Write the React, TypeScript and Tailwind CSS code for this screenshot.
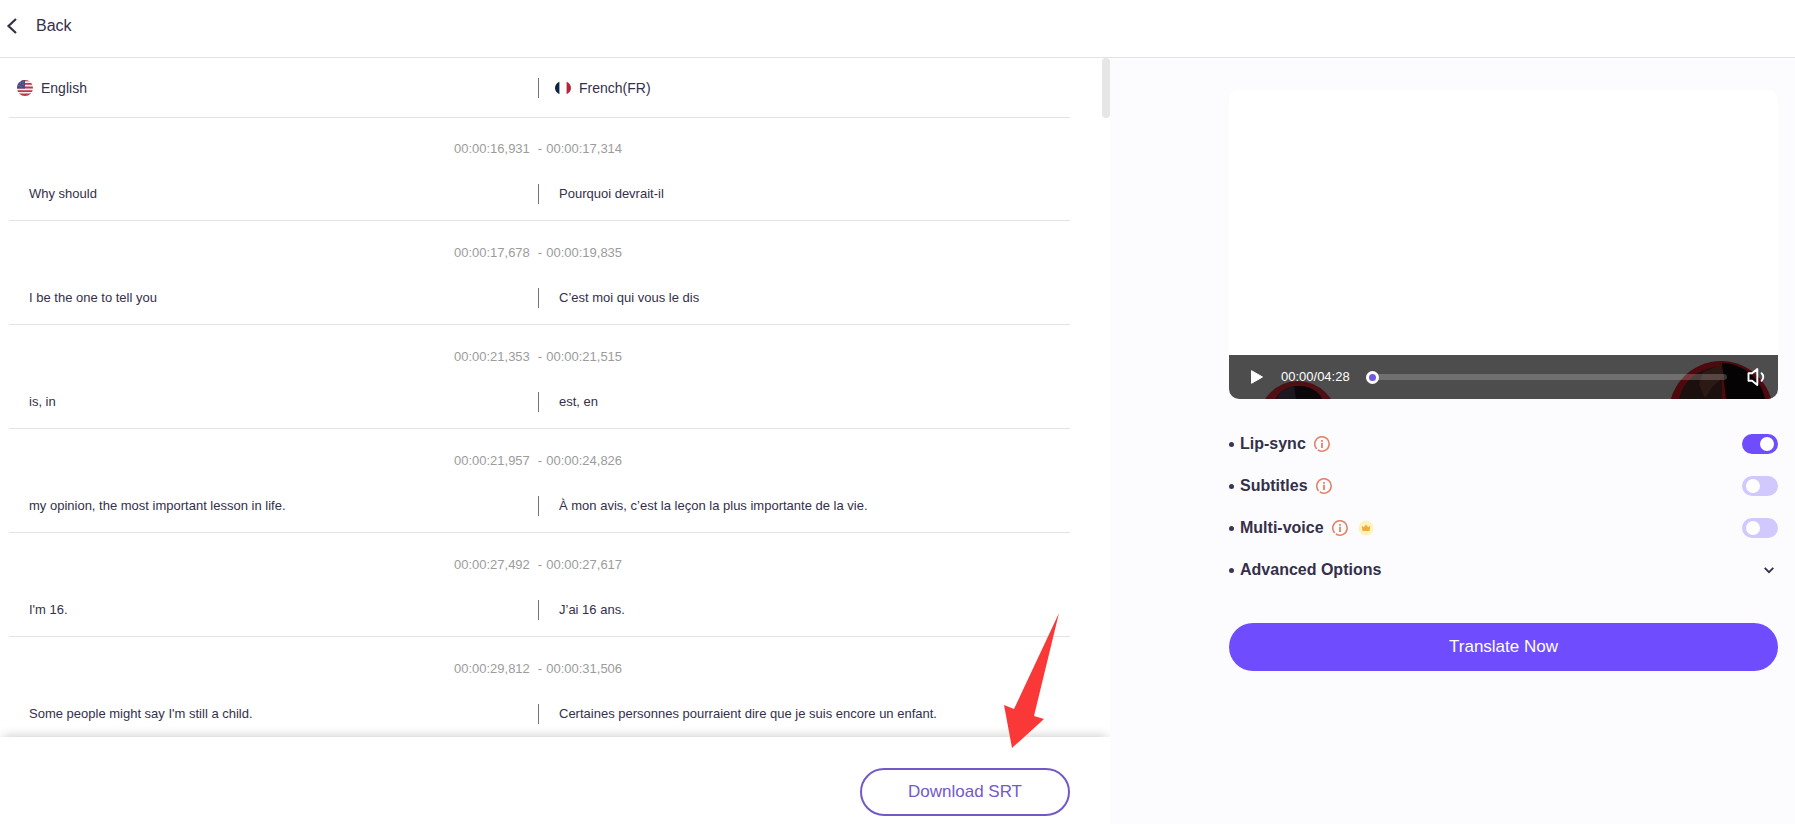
import { useState } from "react";

const cues = [
  { start: "00:00:16,931", end: "00:00:17,314", source: "Why should", target: "Pourquoi devrait-il" },
  { start: "00:00:17,678", end: "00:00:19,835", source: "I be the one to tell you", target: "C’est moi qui vous le dis" },
  { start: "00:00:21,353", end: "00:00:21,515", source: "is, in", target: "est, en" },
  { start: "00:00:21,957", end: "00:00:24,826", source: "my opinion, the most important lesson in life.", target: "À mon avis, c’est la leçon la plus importante de la vie." },
  { start: "00:00:27,492", end: "00:00:27,617", source: "I'm 16.", target: "J’ai 16 ans." },
  { start: "00:00:29,812", end: "00:00:31,506", source: "Some people might say I'm still a child.", target: "Certaines personnes pourraient dire que je suis encore un enfant." },
];

function UsFlag() {
  return (
    <svg className="size-4" viewBox="0 0 16 16" aria-hidden="true">
      <clipPath id="us-clip">
        <circle cx="8" cy="8" r="8" />
      </clipPath>
      <g clipPath="url(#us-clip)">
        <path fill="#f5eef1" d="M0 0h16v16H0z" />
        <path fill="#b93a4c" d="M0 0h16v1.2H0zM0 3h16v1.8H0zM0 6.6h16v1.8H0zM0 10.2h16v1.7H0zM0 13.6h16V16H0z" />
        <path fill="#474a83" d="M0 0h8v8.4H0z" />
        <path fill="#8083ad" d="M3 2.5h1v1H3zM5.5 1.5h1v1h-1zM5.5 4h1v1h-1zM1.5 5h1v1h-1zM3.5 6.2h1v1h-1z" />
      </g>
    </svg>
  );
}

function FrFlag() {
  return (
    <svg className="size-4" viewBox="0 0 16 16" aria-hidden="true">
      <path fill="#0b2545" d="M4.4 1.8v12.4C1.8 13 0 10.8 0 8s1.8-5 4.4-6.2z" />
      <path fill="#b3263a" d="M11.6 1.8v12.4C14.2 13 16 10.8 16 8s-1.8-5-4.4-6.2z" />
    </svg>
  );
}

function InfoIcon() {
  return (
    <svg className="size-4" viewBox="0 0 16 16" fill="none" stroke="#e08468" aria-hidden="true">
      <path strokeWidth="1.6" strokeLinecap="round" d="M4.4 14.2A7.2 7.2 0 1 0 2.3 12.4" />
      <path strokeWidth="1.8" d="M8 6.8V12M8 4v1.8" />
    </svg>
  );
}

function CrownBadge() {
  return (
    <svg className="size-4" viewBox="0 0 16 16" aria-hidden="true">
      <circle cx="8" cy="8" r="7.6" fill="#fdf3bd" />
      <path fill="#f2a93f" d="M3.8 5.8l2.1 1.5L8 4.6l2.1 2.7 2.1-1.5-.7 5.2h-7z" />
    </svg>
  );
}

function Toggle({ id, checked, onChange }: { id: string; checked: boolean; onChange: (value: boolean) => void }) {
  return (
    <input
      id={id}
      type="checkbox"
      role="switch"
      checked={checked}
      onChange={(e) => onChange(e.target.checked)}
      className="flex h-5 w-9 shrink-0 cursor-pointer appearance-none items-center rounded-full bg-[#d1c8fd] px-1 before:size-3.5 before:rounded-full before:bg-white checked:justify-end checked:bg-[#6f4dff]"
    />
  );
}

function Bullet() {
  return <span className="mr-1.5 size-[5px] rounded-full bg-[#3b3455]" />;
}

function VideoPlayer() {
  return (
    <div className="relative flex aspect-[549/309] flex-col justify-end overflow-hidden rounded-[10px] bg-white">
      <div className="relative flex h-11 items-center bg-[#4d4d4d] pr-3 pl-[22px]">
        <svg className="absolute bottom-0 left-9" width="66" height="18" viewBox="0 0 66 18" aria-hidden="true">
          <circle cx="33" cy="39" r="39" fill="#4f1015" />
          <ellipse cx="34" cy="23" rx="24" ry="18" fill="#0c0809" />
          <path fill="#1d1820" d="M12 18c2-8 10-12 17-13l2 13z" />
        </svg>
        <svg className="absolute right-1.5 bottom-0" width="102" height="38" viewBox="0 0 102 38" aria-hidden="true">
          <circle cx="51" cy="52" r="52" fill="#4d090d" />
          <path fill="#1c100e" d="M9 38C13 20 28 7 52 5v33z" />
          <path fill="#060304" d="M52 2c24 1 39 17 43 36H56z" />
          <path fill="#2c1916" d="M33 11l18-7 3 12-11 9-8 12-6-14z" />
        </svg>
        <button type="button" aria-label="Play" className="relative">
          <svg className="h-3.5 w-3" viewBox="0 0 12 14" fill="#fff">
            <path d="M.5.7v12.6L11.5 7z" stroke="#fff" strokeLinejoin="round" />
          </svg>
        </button>
        <span className="relative ml-[18px] text-[13px] leading-5 text-white">00:00/04:28</span>
        <input
          type="range"
          aria-label="Seek"
          min={0}
          max={268}
          defaultValue={0}
          className="relative ml-4 h-1.5 min-w-0 flex-1 cursor-pointer appearance-none rounded-full bg-white/20 [&::-webkit-slider-thumb]:size-[13px] [&::-webkit-slider-thumb]:appearance-none [&::-webkit-slider-thumb]:rounded-full [&::-webkit-slider-thumb]:border-3 [&::-webkit-slider-thumb]:border-white [&::-webkit-slider-thumb]:bg-[#7359e0]"
        />
        <button type="button" aria-label="Volume" className="relative ml-5">
          <svg className="h-5 w-[19px]" viewBox="0 0 19 20" fill="none" stroke="#fff" strokeWidth="1.9" strokeLinecap="round" strokeLinejoin="round">
            <path d="M1.5 6.3h3.6l5.2-4.3v16l-5.2-4.3H1.5z" />
            <path d="M14.6 6.2c2.2 2 2.2 5.6 0 7.6" />
          </svg>
        </button>
      </div>
    </div>
  );
}

export default function App() {
  const [lipSync, setLipSync] = useState(true);
  const [subtitles, setSubtitles] = useState(false);
  const [multiVoice, setMultiVoice] = useState(false);

  return (
    <div className="flex h-screen flex-col bg-white font-['Liberation_Sans',Arial,sans-serif] text-[#353049]">
      <header className="flex h-[58px] shrink-0 items-center border-b border-[#e3e3e6] pb-1.5 pl-1.5">
        <button type="button" className="flex cursor-pointer items-center gap-[18px] text-base">
          <svg className="h-4 w-3" viewBox="0 0 12 16" fill="none" stroke="currentColor" strokeWidth="2.2" aria-hidden="true">
            <path d="M10 1L2.5 8l7.5 7" />
          </svg>
          Back
        </button>
      </header>

      <div className="flex min-h-0 flex-1">
        <main className="relative flex min-w-0 flex-1 flex-col overflow-hidden">
          <div className="min-h-0 flex-1 overflow-hidden pr-10 pl-[9px]">
            <div className="grid grid-cols-2 border-b border-[#e3e3e6] pt-5 pr-[3px] pb-[19px] text-sm leading-5">
              <div className="flex items-center gap-2 pl-2">
                <UsFlag />
                English
              </div>
              <div className="flex items-center gap-2 border-l border-[#75727f] pl-4">
                <FrFlag />
                French(FR)
              </div>
            </div>
            <ul>
              {cues.map((cue) => (
                <li
                  key={cue.start}
                  className="border-b border-[#e3e3e6] pt-[22px] pr-[3px] pb-4 text-[13px] leading-5 first:pt-[21px]"
                >
                  <div className="flex justify-center text-[#9c9c9c]">
                    <span>{cue.start}</span>
                    <span className="mr-1 ml-2">-</span>
                    <span>{cue.end}</span>
                  </div>
                  <div className="mt-[25px] grid grid-cols-2">
                    <p className="pl-5">{cue.source}</p>
                    <p className="border-l border-[#75727f] pl-5">{cue.target}</p>
                  </div>
                </li>
              ))}
            </ul>
          </div>

          <div className="absolute top-0 right-0 h-15 w-2 rounded-full bg-[#e6e6e6]" />

          <footer className="relative flex h-[87px] shrink-0 items-start justify-end bg-white pt-[31px] pr-10 shadow-[0_-4px_10px_-3px_rgba(0,0,0,0.2)]">
            <button
              type="button"
              className="h-12 w-[210px] cursor-pointer rounded-full border-2 border-[#7359c8] text-[17px] text-[#7359c8]"
            >
              Download SRT
            </button>
            <svg className="pointer-events-none absolute right-[50px] bottom-[75px]" width="57" height="137" viewBox="0 0 57 137" aria-hidden="true">
              <path fill="#fb3838" d="M56 1L11 97 1 93l8 43 32-29-10-3z" />
            </svg>
          </footer>
        </main>

        <aside className="w-[685px] shrink-0 bg-[#fcfcff] pt-8 pr-[17px] pl-[119px]">
          <VideoPlayer />

          <div className="mt-[35px] flex flex-col gap-[22px] text-base leading-5 font-bold">
            <div className="flex items-center">
              <Bullet />
              <label htmlFor="lip-sync" className="mr-2">Lip-sync</label>
              <InfoIcon />
              <span className="flex-1" />
              <Toggle id="lip-sync" checked={lipSync} onChange={setLipSync} />
            </div>
            <div className="flex items-center">
              <Bullet />
              <label htmlFor="subtitles" className="mr-2">Subtitles</label>
              <InfoIcon />
              <span className="flex-1" />
              <Toggle id="subtitles" checked={subtitles} onChange={setSubtitles} />
            </div>
            <div className="flex items-center">
              <Bullet />
              <label htmlFor="multi-voice" className="mr-2">Multi-voice</label>
              <InfoIcon />
              <span className="w-2.5" />
              <CrownBadge />
              <span className="flex-1" />
              <Toggle id="multi-voice" checked={multiVoice} onChange={setMultiVoice} />
            </div>
            <button type="button" className="flex cursor-pointer items-center">
              <Bullet />
              Advanced Options
              <span className="flex-1" />
              <svg className="mr-1 h-2 w-2.5" viewBox="0 0 10 8" fill="none" stroke="currentColor" strokeWidth="1.8" aria-hidden="true">
                <path d="M.7 1.8L5 6.2l4.3-4.4" />
              </svg>
            </button>
          </div>

          <button
            type="button"
            className="mt-[43px] h-12 w-full cursor-pointer rounded-full bg-[#6f4dff] text-[17px] text-white"
          >
            Translate Now
          </button>
        </aside>
      </div>
    </div>
  );
}
